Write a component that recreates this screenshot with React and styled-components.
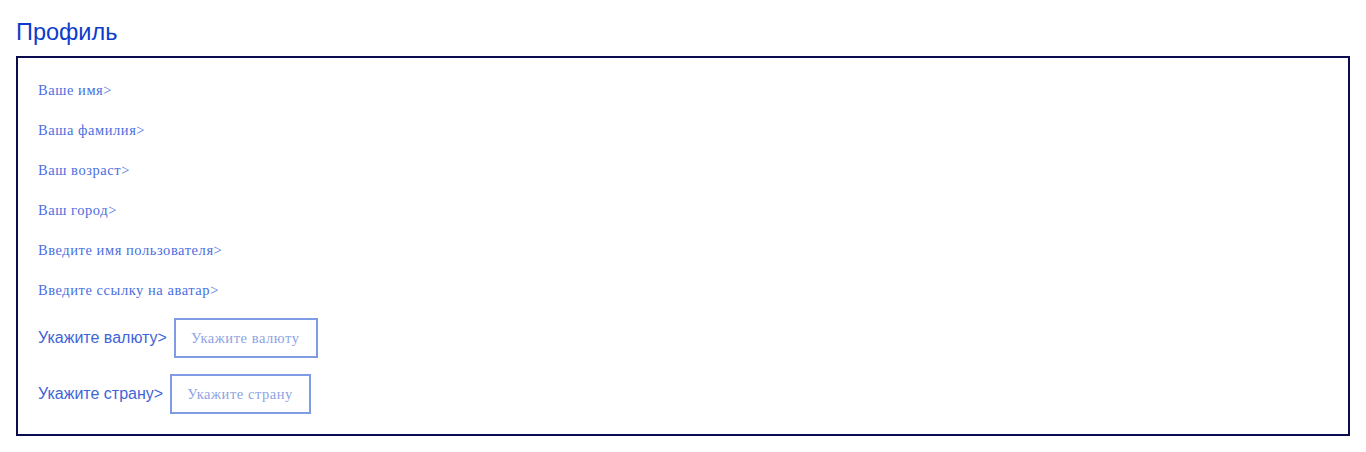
import React from "react"
import styled, { createGlobalStyle } from "styled-components"

const Global = createGlobalStyle`
  body {
    margin: 0;
    padding: 16px;
    background: #fff;
    font-family: "Liberation Serif", serif;
  }
`

const Title = styled.h2`
  margin: 2px 0 10px;
  font-family: "Liberation Sans", Arial, sans-serif;
  font-weight: normal;
  font-size: 23.5px;
  line-height: 28px;
  color: #0b3ccc;
`

const Card = styled.div`
  border: 2px solid #0b0b4f;
  padding: 12px 20px 20px;
  display: flex;
  flex-direction: column;
`

const TextRow = styled.div`
  height: 40px;
  line-height: 40px;
  font-family: "Liberation Serif", serif;
  font-size: 14.5px;
  letter-spacing: 0.55px;
  color: #4a6fe0;
`

const SelectGroup = styled.div`
  display: flex;
  flex-direction: column;
  gap: 16px;
  margin-top: 8px;
`

const SelectRow = styled.div`
  display: flex;
  align-items: center;
  gap: 7px;
`

const Label = styled.span`
  font-family: "Liberation Sans", Arial, sans-serif;
  font-size: 16px;
  color: #3f64d8;
`

const Picker = styled.div`
  height: 40px;
  box-sizing: border-box;
  border: 2px solid #7f9be3;
  padding: 0 16px 0 15px;
  display: flex;
  align-items: center;
  font-family: "Liberation Serif", serif;
  font-size: 14.5px;
  letter-spacing: 0.55px;
  color: #8ea3e3;
`

const rows = [
  "Ваше имя>",
  "Ваша фамилия>",
  "Ваш возраст>",
  "Ваш город>",
  "Введите имя пользователя>",
  "Введите ссылку на аватар>",
]

const selects = [
  { label: "Укажите валюту>", placeholder: "Укажите валюту" },
  { label: "Укажите страну>", placeholder: "Укажите страну" },
]

export default function App() {
  return (
    <>
      <Global />
      <Title>Профиль</Title>
      <Card>
        {rows.map(r => (
          <TextRow key={r}>{r}</TextRow>
        ))}
        <SelectGroup>
          {selects.map(s => (
            <SelectRow key={s.label}>
              <Label>{s.label}</Label>
              <Picker>{s.placeholder}</Picker>
            </SelectRow>
          ))}
        </SelectGroup>
      </Card>
    </>
  )
}
